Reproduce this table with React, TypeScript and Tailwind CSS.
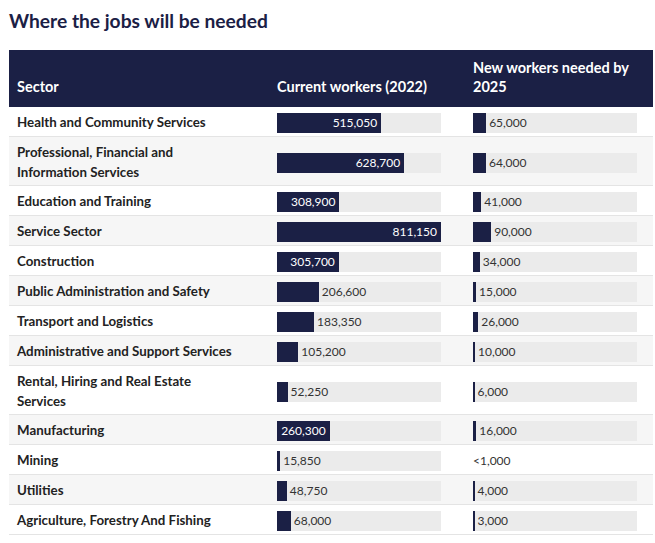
import React from "react";

const MAX = 811150;
const BAR_W = 164;

type Row = { sector: string; cur: number; curLabel: string; nw: number; nwLabel: string; noBar?: boolean };

const rows: Row[] = [
  { sector: "Health and Community Services", cur: 515050, curLabel: "515,050", nw: 65000, nwLabel: "65,000" },
  { sector: "Professional, Financial and Information Services", cur: 628700, curLabel: "628,700", nw: 64000, nwLabel: "64,000" },
  { sector: "Education and Training", cur: 308900, curLabel: "308,900", nw: 41000, nwLabel: "41,000" },
  { sector: "Service Sector", cur: 811150, curLabel: "811,150", nw: 90000, nwLabel: "90,000" },
  { sector: "Construction", cur: 305700, curLabel: "305,700", nw: 34000, nwLabel: "34,000" },
  { sector: "Public Administration and Safety", cur: 206600, curLabel: "206,600", nw: 15000, nwLabel: "15,000" },
  { sector: "Transport and Logistics", cur: 183350, curLabel: "183,350", nw: 26000, nwLabel: "26,000" },
  { sector: "Administrative and Support Services", cur: 105200, curLabel: "105,200", nw: 10000, nwLabel: "10,000" },
  { sector: "Rental, Hiring and Real Estate Services", cur: 52250, curLabel: "52,250", nw: 6000, nwLabel: "6,000" },
  { sector: "Manufacturing", cur: 260300, curLabel: "260,300", nw: 16000, nwLabel: "16,000" },
  { sector: "Mining", cur: 15850, curLabel: "15,850", nw: 0, nwLabel: "<1,000", noBar: true },
  { sector: "Utilities", cur: 48750, curLabel: "48,750", nw: 4000, nwLabel: "4,000" },
  { sector: "Agriculture, Forestry And Fishing", cur: 68000, curLabel: "68,000", nw: 3000, nwLabel: "3,000" },
];

function Bar({ value, label, noBar }: { value: number; label: string; noBar?: boolean }) {
  if (noBar) {
    return <div className="h-[20px] flex items-center text-[12px] text-[#333]">{label}</div>;
  }
  const w = Math.max(1.5, (value / MAX) * BAR_W);
  const inside = w >= 50;
  return (
    <div className="relative h-[20px] w-[164px] bg-[#ebebeb] flex items-center">
      <div className="h-full bg-[#1b2045] flex items-center justify-end shrink-0" style={{ width: w }}>
        {inside && <span className="text-[12px] text-white pr-[4px] leading-none">{label}</span>}
      </div>
      {!inside && <span className="text-[12px] text-[#333] pl-[3px] leading-none whitespace-nowrap">{label}</span>}
    </div>
  );
}

export default function App() {
  return (
    <div className="w-[655px] h-[543px] bg-white overflow-hidden" style={{ fontFamily: "Lato, 'Liberation Sans', sans-serif" }}>
      <h1 className="pl-[9px] pt-[9px] text-[19.2px] leading-[24px] font-bold text-[#1b2045]">Where the jobs will be needed</h1>
      <div className="mx-[9px] mt-[17px] w-[644px]">
        <div className="grid grid-cols-[260px_196px_188px] bg-[#1b2045] text-white font-bold text-[14.5px] leading-[19px] h-[57px] items-end pb-[11px]">
          <div className="pl-[8px]">Sector</div>
          <div className="pl-[8px]">Current workers (2022)</div>
          <div className="pl-[8px] pr-[10px]">New workers needed by 2025</div>
        </div>
        {rows.map((r, i) => (
          <div
            key={r.sector}
            className={`grid grid-cols-[260px_196px_188px] items-center pt-[6px] pb-[3px] border-b border-[#e4e4e4] ${i % 2 === 1 ? "bg-[#f6f6f6]" : "bg-white"}`}
          >
            <div className="pl-[8px] pr-[32px] font-bold text-[13.3px] leading-[19.5px] text-[#222]">{r.sector}</div>
            <div className="pl-[8px]"><Bar value={r.cur} label={r.curLabel} /></div>
            <div className="pl-[8px]"><Bar value={r.nw} label={r.nwLabel} noBar={r.noBar} /></div>
          </div>
        ))}
      </div>
    </div>
  );
}
